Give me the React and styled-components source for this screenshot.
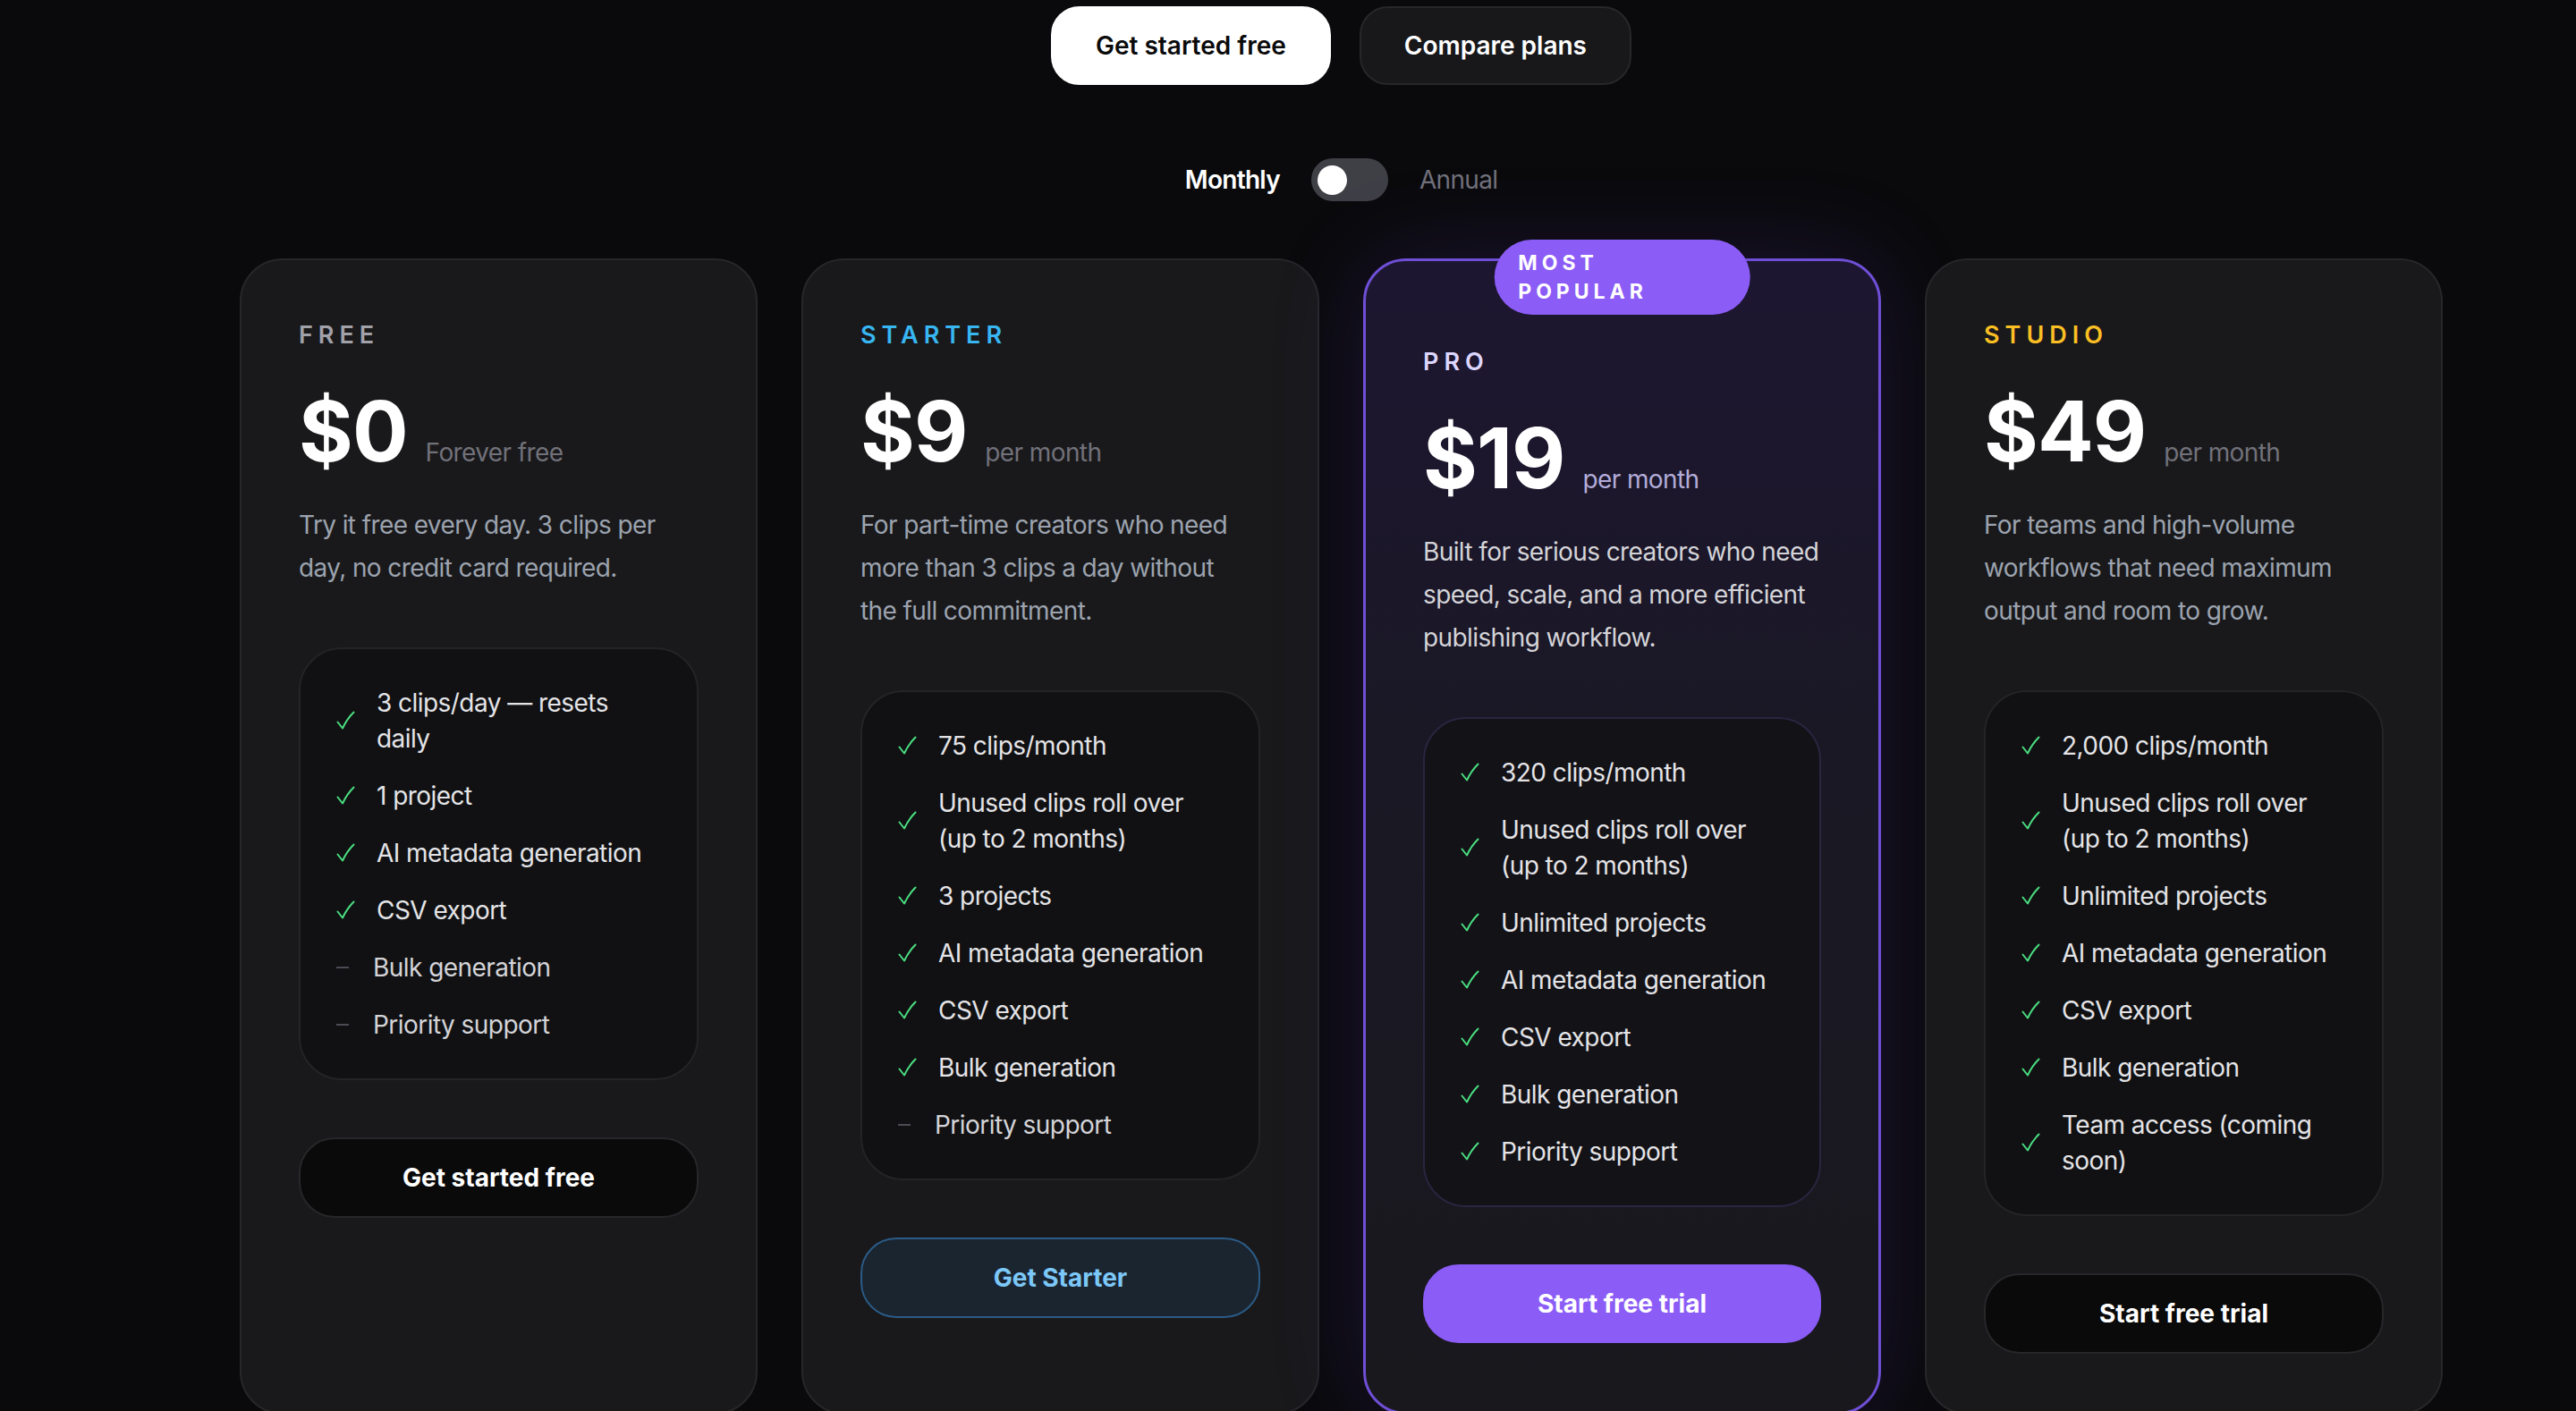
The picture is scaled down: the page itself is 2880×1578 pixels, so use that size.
import React from "react";
import styled, { createGlobalStyle, css } from "styled-components";

const GlobalStyle = createGlobalStyle`
  html, body {
    margin: 0;
    padding: 0;
    background: #0a0a0c;
    font-family: Inter, "Noto Sans", "Liberation Sans", sans-serif;
    color: #fafafa;
    -webkit-font-smoothing: antialiased;
  }
  * { box-sizing: border-box; }
`;

const Page = styled.main`
  min-height: 1578px;
  background: #0a0a0c;
  padding-top: 7px;
  overflow: hidden;
`;

const Container = styled.div`
  width: 2463px;
  margin-left: 268px;
  display: flex;
  flex-direction: column;
  align-items: center;
`;

const HeroActions = styled.div`
  display: flex;
  gap: 32px;
`;

const HeroButton = styled.button`
  height: 88px;
  padding: 0 48px;
  border-radius: 32px;
  font-family: inherit;
  font-size: 28px;
  font-weight: 600;
  cursor: pointer;
  ${(p) =>
    p.$primary
      ? css`
          background: #ffffff;
          color: #0a0a0b;
          border: 2px solid #ffffff;
        `
      : css`
          background: #18181b;
          color: #ffffff;
          border: 2px solid #27272a;
        `}
`;

const BillingRow = styled.div`
  margin-top: 82px;
  display: flex;
  align-items: center;
  gap: 35px;
  height: 48px;
`;

const BillingLabel = styled.span`
  font-size: 28px;
  letter-spacing: -0.7px;
  font-weight: ${(p) => (p.$active ? 600 : 400)};
  color: ${(p) => (p.$active ? "#ffffff" : "#71717a")};
`;

const Toggle = styled.div`
  width: 86px;
  height: 48px;
  border-radius: 24px;
  background: #3f3f46;
  display: flex;
  align-items: center;
  padding: 0 7px;
`;

const Knob = styled.span`
  width: 33px;
  height: 33px;
  border-radius: 50%;
  background: #ffffff;
`;

const Grid = styled.div`
  margin-top: 64px;
  width: 100%;
  display: grid;
  grid-template-columns: repeat(4, 1fr);
  gap: 49px;
  align-items: stretch;
`;

const Card = styled.section`
  position: relative;
  display: flex;
  flex-direction: column;
  border-radius: 48px;
  padding: ${(p) => (p.$featured ? "97px" : "68px")} 64px 66px;
  ${(p) =>
    p.$featured
      ? css`
          background: linear-gradient(180deg, #1d1631 0%, #1a1824 45%, #19181d 100%);
          border: 3px solid #6f4fd6;
          box-shadow: 0 0 110px rgba(124, 77, 255, 0.16);
        `
      : css`
          background: #19191b;
          border: 2px solid #27272a;
        `}
`;

const Badge = styled.div`
  position: absolute;
  top: -24px;
  left: 50%;
  transform: translateX(-50%);
  padding: 10px 27px;
  border-radius: 42px;
  background: #8b5cf6;
  color: #ffffff;
  font-size: 23px;
  font-weight: 700;
  line-height: 32px;
  letter-spacing: 5px;
`;

const TierName = styled.div`
  font-size: 27px;
  line-height: 32px;
  font-weight: 600;
  letter-spacing: 6px;
  color: ${(p) => p.$color};
`;

const PriceRow = styled.div`
  margin-top: 45px;
  display: flex;
  align-items: baseline;
  gap: 20px;
`;

const Amount = styled.span`
  font-size: 93px;
  line-height: 92px;
  font-weight: 700;
  letter-spacing: -1px;
  color: #ffffff;
`;

const Period = styled.span`
  font-size: 28px;
  letter-spacing: -0.6px;
  color: ${(p) => p.$color};
`;

const Description = styled.p`
  margin: 35px 0 0;
  font-size: 28px;
  line-height: 48px;
  letter-spacing: -0.6px;
  color: ${(p) => p.$color};
`;

const FeatureBox = styled.ul`
  list-style: none;
  margin: 65px 0 0;
  padding: 40px;
  border-radius: 48px;
  background: ${(p) => (p.$featured ? "#131217" : "#111113")};
  border: 2px solid ${(p) => (p.$featured ? "#2a2540" : "#242427")};
  display: flex;
  flex-direction: column;
  gap: 24px;
`;

const Feature = styled.li`
  display: flex;
  align-items: center;
  gap: ${(p) => (p.$off ? "25px" : "24px")};
  font-size: 28px;
  line-height: 40px;
  letter-spacing: -0.55px;
  color: ${(p) => (p.$off ? "#d4d4d8" : "#e4e4e7")};
`;

const MarkSlot = styled.span`
  flex: none;
  width: ${(p) => (p.$off ? "16px" : "21px")};
  height: 40px;
  display: flex;
  align-items: center;
  justify-content: flex-start;
`;

const Dash = styled.span`
  width: 14px;
  height: 2px;
  background: #4b4b53;
`;

const CTA = styled.button`
  margin-top: 64px;
  height: 90px;
  width: 100%;
  border-radius: 40px;
  font-family: inherit;
  font-size: 28px;
  font-weight: 700;
  cursor: pointer;
  ${(p) =>
    p.$variant === "accent"
      ? css`
          background: #8b5cf6;
          border: 2px solid #8b5cf6;
          color: #ffffff;
          height: 88px;
        `
      : p.$variant === "blue"
      ? css`
          background: #1b2530;
          border: 2px solid #2b5b86;
          color: #7cc8f8;
        `
      : css`
          background: #0a0a0b;
          border: 2px solid #27272a;
          color: #ffffff;
        `}
`;

function Check() {
  return (
    <svg width="21" height="22" viewBox="0 0 21 22" fill="none">
      <path
        d="M1.5 12.5 L7 19.5 C10 13 14 7 19.5 1.5"
        stroke="#4ade80"
        strokeWidth="2"
        strokeLinecap="round"
        strokeLinejoin="round"
      />
    </svg>
  );
}

const plans = [
  {
    name: "FREE",
    nameColor: "#a1a1aa",
    price: "$0",
    period: "Forever free",
    periodColor: "#71717a",
    desc: ["Try it free every day. 3 clips per", "day, no credit card required."],
    descColor: "#9ca3af",
    features: [
      ["3 clips/day — resets daily", true],
      ["1 project", true],
      ["AI metadata generation", true],
      ["CSV export", true],
      ["Bulk generation", false],
      ["Priority support", false],
    ],
    cta: "Get started free",
    variant: "dark",
  },
  {
    name: "STARTER",
    nameColor: "#38b6f2",
    price: "$9",
    period: "per month",
    periodColor: "#71717a",
    desc: [
      "For part-time creators who need",
      "more than 3 clips a day without",
      "the full commitment.",
    ],
    descColor: "#9ca3af",
    features: [
      ["75 clips/month", true],
      ["Unused clips roll over (up to 2 months)", true],
      ["3 projects", true],
      ["AI metadata generation", true],
      ["CSV export", true],
      ["Bulk generation", true],
      ["Priority support", false],
    ],
    cta: "Get Starter",
    variant: "blue",
  },
  {
    name: "PRO",
    nameColor: "#ddd6fe",
    price: "$19",
    period: "per month",
    periodColor: "#b3acd9",
    desc: [
      "Built for serious creators who need",
      "speed, scale, and a more efficient",
      "publishing workflow.",
    ],
    descColor: "#d4d4d8",
    featured: true,
    features: [
      ["320 clips/month", true],
      ["Unused clips roll over (up to 2 months)", true],
      ["Unlimited projects", true],
      ["AI metadata generation", true],
      ["CSV export", true],
      ["Bulk generation", true],
      ["Priority support", true],
    ],
    cta: "Start free trial",
    variant: "accent",
  },
  {
    name: "STUDIO",
    nameColor: "#fbbf24",
    price: "$49",
    period: "per month",
    periodColor: "#71717a",
    desc: [
      "For teams and high-volume",
      "workflows that need maximum",
      "output and room to grow.",
    ],
    descColor: "#9ca3af",
    features: [
      ["2,000 clips/month", true],
      ["Unused clips roll over (up to 2 months)", true],
      ["Unlimited projects", true],
      ["AI metadata generation", true],
      ["CSV export", true],
      ["Bulk generation", true],
      ["Team access (coming soon)", true],
    ],
    cta: "Start free trial",
    variant: "dark",
  },
];

function PlanCard({ plan }) {
  return (
    <Card $featured={plan.featured}>
      {plan.featured && <Badge>MOST POPULAR</Badge>}
      <TierName $color={plan.nameColor}>{plan.name}</TierName>
      <PriceRow>
        <Amount>{plan.price}</Amount>
        <Period $color={plan.periodColor}>{plan.period}</Period>
      </PriceRow>
      <Description $color={plan.descColor}>
        {plan.desc.map((line, i) => (
          <React.Fragment key={i}>
            {i > 0 && <br />}
            {line}
          </React.Fragment>
        ))}
      </Description>
      <FeatureBox $featured={plan.featured}>
        {plan.features.map(([text, on]) => (
          <Feature key={text} $off={!on}>
            <MarkSlot $off={!on}>{on ? <Check /> : <Dash />}</MarkSlot>
            <span>{text}</span>
          </Feature>
        ))}
      </FeatureBox>
      <CTA $variant={plan.variant}>{plan.cta}</CTA>
    </Card>
  );
}

export default function App() {
  return (
    <>
      <GlobalStyle />
      <Page>
        <Container>
          <HeroActions>
            <HeroButton $primary>Get started free</HeroButton>
            <HeroButton>Compare plans</HeroButton>
          </HeroActions>
          <BillingRow>
            <BillingLabel $active>Monthly</BillingLabel>
            <Toggle>
              <Knob />
            </Toggle>
            <BillingLabel>Annual</BillingLabel>
          </BillingRow>
          <Grid>
            {plans.map((p) => (
              <PlanCard key={p.name} plan={p} />
            ))}
          </Grid>
        </Container>
      </Page>
    </>
  );
}
